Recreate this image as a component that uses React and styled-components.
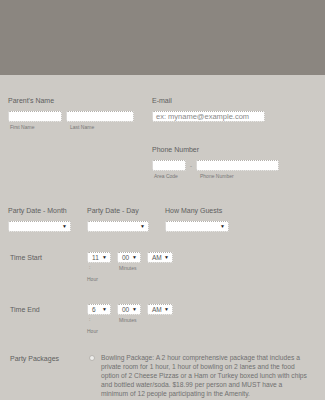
import React from "react";
import styled, { createGlobalStyle } from "styled-components";

const GlobalStyle = createGlobalStyle`
  html, body {
    margin: 0;
    padding: 0;
    background: #cdcac5;
    font-family: "Liberation Sans", Arial, sans-serif;
  }
`;

const Banner = styled.div`
  height: 75px;
  background: #8b8680;
`;

const Form = styled.div`
  padding: 21px 0 0 8px;
  color: #5e5e5e;
`;

const Columns = styled.div`
  display: grid;
  grid-template-columns: 144px 1fr;
`;

const Field = styled.div`
  display: flex;
  flex-direction: column;
  margin-top: ${(p) => p.$top || 0}px;
`;

const Label = styled.div`
  font-size: 7px;
  line-height: 10px;
  height: 10px;
  margin-bottom: 5px;
  white-space: nowrap;
`;

const InputRow = styled.div`
  display: flex;
  align-items: center;
  gap: ${(p) => p.$gap || 4}px;
`;

const Input = styled.div`
  box-sizing: border-box;
  width: ${(p) => p.$w}px;
  height: 11px;
  background: #fff;
  border: 1px dotted #b3b0ab;
  border-radius: 2px;
  font-size: 7.5px;
  line-height: 9px;
  color: #8a8a8a;
  padding-left: 3px;
  white-space: nowrap;
  overflow: hidden;
`;

const Dash = styled.span`
  font-size: 6px;
  color: #777;
  width: 4px;
  text-align: center;
`;

const SubRow = styled.div`
  display: flex;
  margin-top: 2px;
`;

const Sub = styled.div`
  width: ${(p) => p.$w}px;
  padding-left: 2px;
  font-size: 5px;
  line-height: 6px;
  color: #777;
  white-space: nowrap;
`;

const SelectRow = styled.div`
  display: flex;
  margin-top: ${(p) => p.$top || 0}px;
`;

const SelectCol = styled.div`
  width: ${(p) => p.$w}px;
  display: flex;
  flex-direction: column;
`;

const Select = styled.div`
  box-sizing: border-box;
  width: ${(p) => p.$w}px;
  height: 11px;
  background: #fff;
  border: 1px dotted #b3b0ab;
  border-radius: 2px;
  display: flex;
  align-items: center;
  justify-content: space-between;
  padding: 0 3px 0 4px;
  font-size: 6.5px;
  color: #555;
`;

const Arrow = styled.span`
  font-size: 5px;
  line-height: 5px;
  color: #222;
`;

const TimeRow = styled.div`
  display: flex;
  margin-top: ${(p) => p.$top}px;
`;

const SideLabel = styled.div`
  width: 77px;
  padding-left: 2px;
  font-size: 7px;
  line-height: 11px;
  height: 11px;
`;

const TimeParts = styled.div`
  display: flex;
  gap: 6px;
`;

const Part = styled.div`
  display: flex;
  flex-direction: column;
`;

const Tiny = styled.div`
  font-size: 5px;
  line-height: 6px;
  color: #777;
  padding-left: ${(p) => p.$indent || 0}px;
  margin-top: ${(p) => p.$top || 0}px;
`;

const PackageRow = styled.div`
  display: flex;
  margin-top: 19px;
`;

const PackLabel = styled.div`
  width: 79px;
  padding-left: 2px;
  font-size: 7px;
  line-height: 9px;
  margin-top: 1px;
`;

const Radio = styled.span`
  box-sizing: border-box;
  flex: none;
  width: 6px;
  height: 6px;
  margin: 2px 6px 0 0;
  border-radius: 50%;
  background: #eeeeec;
  border: 1px solid #b8b5b0;
`;

const PackText = styled.div`
  flex: 1;
  font-size: 6.7px;
  line-height: 9px;
  color: #707070;
`;

const PackLine = styled.span`
  display: block;
  white-space: nowrap;
`;

const packageLines = [
  "Bowling Package: A 2 hour comprehensive package that includes a",
  "private room for 1 hour, 1 hour of bowling on 2 lanes and the food",
  "option of 2 Cheese Pizzas or a Ham or Turkey boxed lunch with chips",
  "and bottled water/soda. $18.99 per person and MUST have a",
  "minimum of 12 people participating in the Amenity.",
];

const Dropdown = ({ w, value }) => (
  <Select $w={w}>
    <span>{value}</span>
    <Arrow>▼</Arrow>
  </Select>
);

const TimeField = ({ label, hour, top }) => (
  <TimeRow $top={top}>
    <SideLabel>{label}</SideLabel>
    <TimeParts>
      <Part>
        <Dropdown w={24} value={hour} />
        <Tiny $indent={2} $top={1}>:</Tiny>
        <Tiny $top={6}>Hour</Tiny>
      </Part>
      <Part>
        <Dropdown w={24} value="00" />
        <Tiny $indent={2} $top={2}>Minutes</Tiny>
      </Part>
      <Part>
        <Dropdown w={26} value="AM" />
      </Part>
    </TimeParts>
  </TimeRow>
);

export default function App() {
  return (
    <>
      <GlobalStyle />
      <Banner />
      <Form>
        <Columns>
          <Field>
            <Label>Parent's Name</Label>
            <InputRow>
              <Input $w={54} />
              <Input $w={68} />
            </InputRow>
            <SubRow>
              <Sub $w={58}>First Name</Sub>
              <Sub $w={68}>Last Name</Sub>
            </SubRow>
          </Field>
          <div>
            <Field>
              <Label>E-mail</Label>
              <Input $w={113}>ex: myname@example.com</Input>
            </Field>
            <Field $top={23}>
              <Label>Phone Number</Label>
              <InputRow $gap={3}>
                <Input $w={34} />
                <Dash>-</Dash>
                <Input $w={83} />
              </InputRow>
              <SubRow>
                <Sub $w={44}>Area Code</Sub>
                <Sub $w={83}>Phone Number</Sub>
              </SubRow>
            </Field>
          </div>
        </Columns>

        <SelectRow $top={27}>
          <SelectCol $w={79}>
            <Label>Party Date - Month</Label>
            <Dropdown w={63} />
          </SelectCol>
          <SelectCol $w={78}>
            <Label>Party Date - Day</Label>
            <Dropdown w={62} />
          </SelectCol>
          <SelectCol $w={70}>
            <Label>How Many Guests</Label>
            <Dropdown w={64} />
          </SelectCol>
        </SelectRow>

        <TimeField label="Time Start" hour="11" top={20} />
        <TimeField label="Time End" hour="6" top={22} />

        <PackageRow>
          <PackLabel>Party Packages</PackLabel>
          <Radio />
          <PackText>
            {packageLines.map((line, index) => (
              <PackLine key={index}>{line}</PackLine>
            ))}
          </PackText>
        </PackageRow>
      </Form>
    </>
  );
}
